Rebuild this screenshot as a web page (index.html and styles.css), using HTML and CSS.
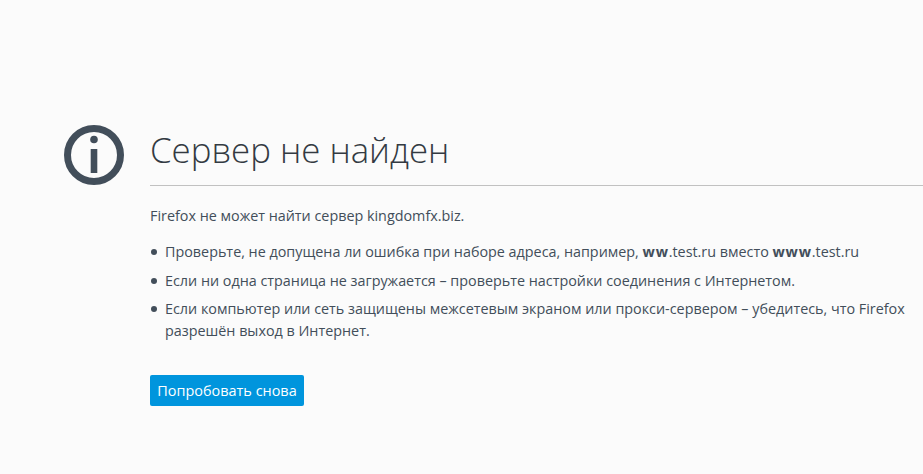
FILE: index.html
```
<!DOCTYPE html>
<html lang="ru">
<head>
<meta charset="utf-8">
<title>Сервер не найден</title>
<link rel="stylesheet" href="styles.css">
</head>
<body>
<main class="container">
  <svg class="icon" width="60" height="60" viewBox="0 0 60 60">
    <circle cx="30" cy="30" r="26.5" fill="none" stroke="#424e5a" stroke-width="7"/>
    <circle cx="30" cy="14.5" r="3.8" fill="#424e5a"/>
    <rect x="26.7" y="24" width="6.6" height="24" fill="#424e5a"/>
  </svg>
  <div class="content">
    <h1 class="title">Сервер не найден</h1>
    <p class="intro">Firefox не может найти сервер kingdomfx.biz.</p>
    <ul class="tips">
      <li>Проверьте, не допущена ли ошибка при наборе адреса, например, <b class="key">ww</b>.test.ru вместо <b class="key">www</b>.test.ru</li>
      <li>Если ни одна страница не загружается – проверьте настройки соединения с Интернетом.</li>
      <li>Если компьютер или сеть защищены межсетевым экраном или прокси-сервером – убедитесь, что Firefox разрешён выход в Интернет.</li>
    </ul>
    <button class="retry">Попробовать снова</button>
  </div>
</main>
</body>
</html>
```
FILE: styles.css
```
* { box-sizing: border-box; }
html, body { margin: 0; height: 100%; }
body {
  background: #fbfbfb;
  color: #424e5a;
  font-family: "Open Sans", sans-serif;
  font-size: 14.35px;
  overflow: hidden;
}
.container {
  display: flex;
  align-items: flex-start;
  padding: 125px 0 0 64px;
  gap: 26px;
}
.icon { flex: none; }
.content { flex: 1; min-width: 0; }
.title {
  margin: 0;
  font-size: 34.8px;
  font-weight: 300;
  line-height: 49px;
  padding-bottom: 11px;
  border-bottom: 1px solid #c1c1c1;
  color: #333a42;
}
.intro { margin: 19px 0 0; line-height: 21px; }
.tips { margin: 15px 0 0; padding: 0; list-style: none; }
.tips li {
  position: relative;
  line-height: 22px;
  margin-bottom: 6.5px;
  padding: 0 10px 0 15px;
}
.tips li::before {
  content: "";
  position: absolute;
  left: 1px;
  top: 8px;
  width: 6px;
  height: 6px;
  border-radius: 50%;
  background: #424e5a;
}
.key { letter-spacing: 0.8px; }
.retry {
  display: block;
  margin-top: 33px;
  width: 154px;
  height: 31px;
  padding: 0;
  background: #0095dd;
  color: #fff;
  border: 0;
  border-radius: 2px;
  font: 14.45px "Open Sans", sans-serif;
}
```
